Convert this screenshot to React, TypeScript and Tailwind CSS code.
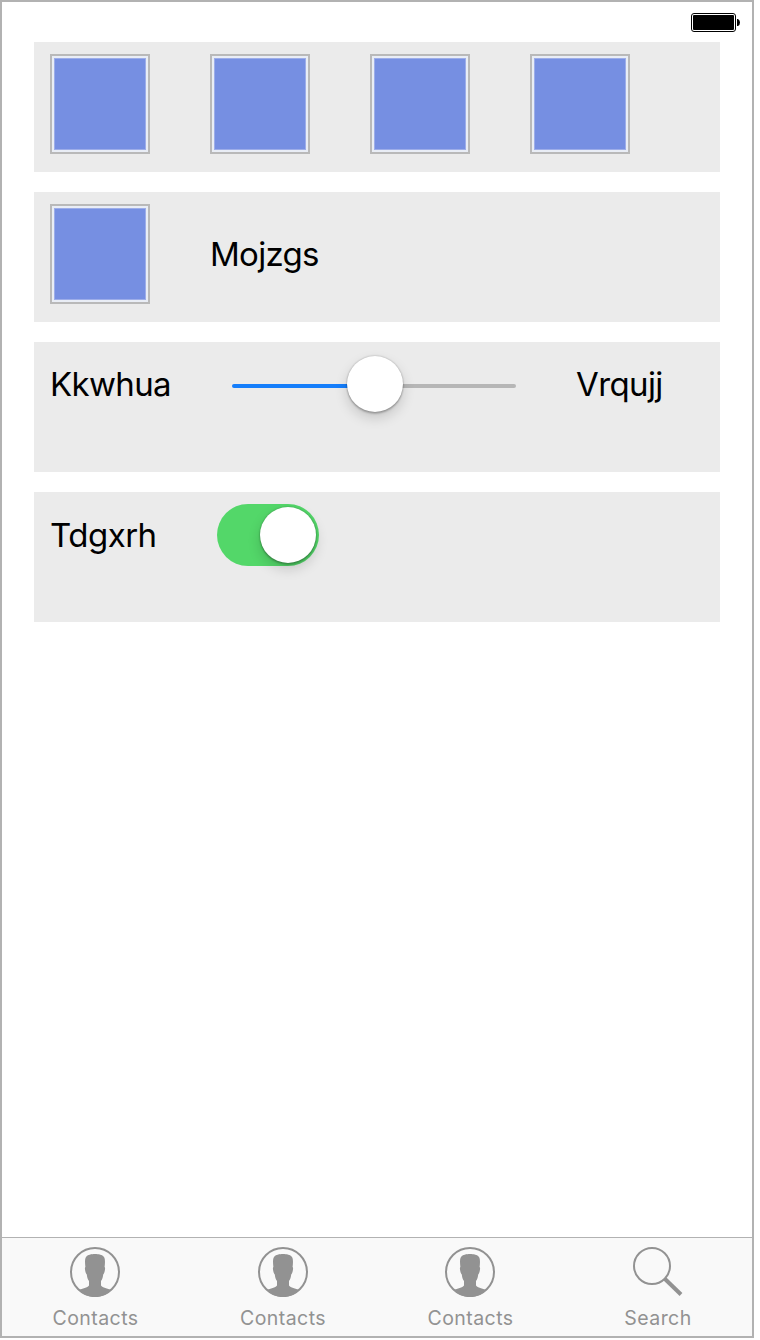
import React from 'react';

function Swatch() {
  return (
    <div className="h-[100px] w-[100px] shrink-0 border-2 border-[#b9b9b9] bg-[#e9edf5] p-[2px]">
      <div className="h-full w-full border border-[#9dade9] bg-[#768fe2]" />
    </div>
  );
}

function Panel({ children, className = '' }: { children: React.ReactNode; className?: string }) {
  return <section className={`flex h-[130px] px-4 pt-3 pb-[18px] bg-[#ebebeb] ${className}`}>{children}</section>;
}

function Battery() {
  return (
    <svg width="50" height="20" viewBox="0 0 50 20" aria-hidden="true">
      <rect x="1.5" y="0.5" width="44" height="18" rx="2.5" fill="#fff" stroke="#000" />
      <rect x="3" y="2" width="41" height="15" rx="1" fill="#000" />
      <path d="M47 6h1q2 1 2 3.500t-2 3.500h-1z" fill="#000" />
    </svg>
  );
}

function ContactIcon() {
  return (
    <svg width="50" height="50" viewBox="0 0 50 50" aria-hidden="true">
      <circle cx="25" cy="25" r="24" fill="none" stroke="#929292" strokeWidth="2" />
      <path
        fill="#929292"
        d="M25 7c3.500 0 7.500.8 9 3 1.300 2 1.100 6 .6 10 .6.300.6 1.500.3 3-.3 2.200-.8 3.700-1.700 4.500-.3 2.800-.9 5-2.200 6.500V38.500c1.500 2.500 6.500 2.800 10.500 4.500C37 47.500 31.500 50 25 50S13 47.500 8.500 43C12.500 41.300 17.500 41 19 38.500V34c-1.300-1.500-1.900-3.700-2.200-6.500-.9-.8-1.400-2.300-1.700-4.500-.3-1.500-.3-2.700.3-3-.5-4-.7-8 .6-10 1.500-2.200 5.500-3 9-3z"
      />
    </svg>
  );
}

function SearchIcon() {
  return (
    <svg width="50" height="50" viewBox="0 0 50 50" aria-hidden="true">
      <circle cx="19" cy="19" r="18" fill="none" stroke="#929292" strokeWidth="2" />
      <path d="M32 32L48 47.500" stroke="#929292" strokeWidth="4" />
    </svg>
  );
}

const tabs = [
  { label: 'Contacts', Icon: ContactIcon },
  { label: 'Contacts', Icon: ContactIcon },
  { label: 'Contacts', Icon: ContactIcon },
  { label: 'Search', Icon: SearchIcon },
];

export default function App() {
  return (
    <div className="h-[1340px] w-[760px] bg-white font-['Inter',sans-serif]">
      <div className="flex h-[1338px] w-[754px] flex-col border-2 border-[#b2b2b2] bg-white">
        <header className="flex h-10 shrink-0 justify-end pt-[11px] pr-3">
          <Battery />
        </header>
        <main className="flex grow flex-col gap-5 px-8 text-[33px] leading-10 text-black">
          <Panel className="gap-[60px]">
            <Swatch />
            <Swatch />
            <Swatch />
            <Swatch />
          </Panel>
          <Panel className="items-center gap-[60px]">
            <Swatch />
            <span className="tracking-[-0.7px]">Mojzgs</span>
          </Panel>
          <Panel>
            <span className="mt-2.5 w-[182px] tracking-[-0.65px]">Kkwhua</span>
            <div className="flex h-[60px] w-[284px] items-center">
              <div className="mt-1 h-1 w-[117px] rounded-l-full bg-[#157efb]" />
              <div className="z-10 -mx-0.5 h-14 w-14 shrink-0 rounded-full bg-white shadow-[0_6px_13px_rgba(0,0,0,0.16),0_2px_2px_rgba(0,0,0,0.2),0_0_2px_rgba(0,0,0,0.3)]" />
              <div className="mt-1 h-1 grow rounded-r-full bg-[#b6b6b6]" />
            </div>
            <span className="mt-2.5 ml-[60px] tracking-[-0.6px]">Vrqujj</span>
          </Panel>
          <Panel>
            <span className="mt-[11px] w-[167px] tracking-[-0.5px]">Tdgxrh</span>
            <div className="flex h-[62px] w-[102px] items-center justify-end rounded-full bg-[#53d769] pr-[3px]">
              <div className="h-14 w-14 rounded-full bg-white shadow-[0_6px_13px_rgba(0,0,0,0.16),0_2px_2px_rgba(0,0,0,0.2),0_0_2px_rgba(0,0,0,0.3)]" />
            </div>
          </Panel>
        </main>
        <nav className="grid h-[99px] shrink-0 grid-cols-4 border-t border-[#b2b2b2] bg-[#f9f9f9] pt-[9px]">
          {tabs.map(({ label, Icon }, i) => (
            <div key={i} className="flex flex-col items-center pr-[1px]">
              <Icon />
              <span className="mt-[9px] pl-[0.500px] text-[19.500px] leading-6 tracking-[0.45px] text-[#929292]">{label}</span>
            </div>
          ))}
        </nav>
      </div>
    </div>
  );
}
